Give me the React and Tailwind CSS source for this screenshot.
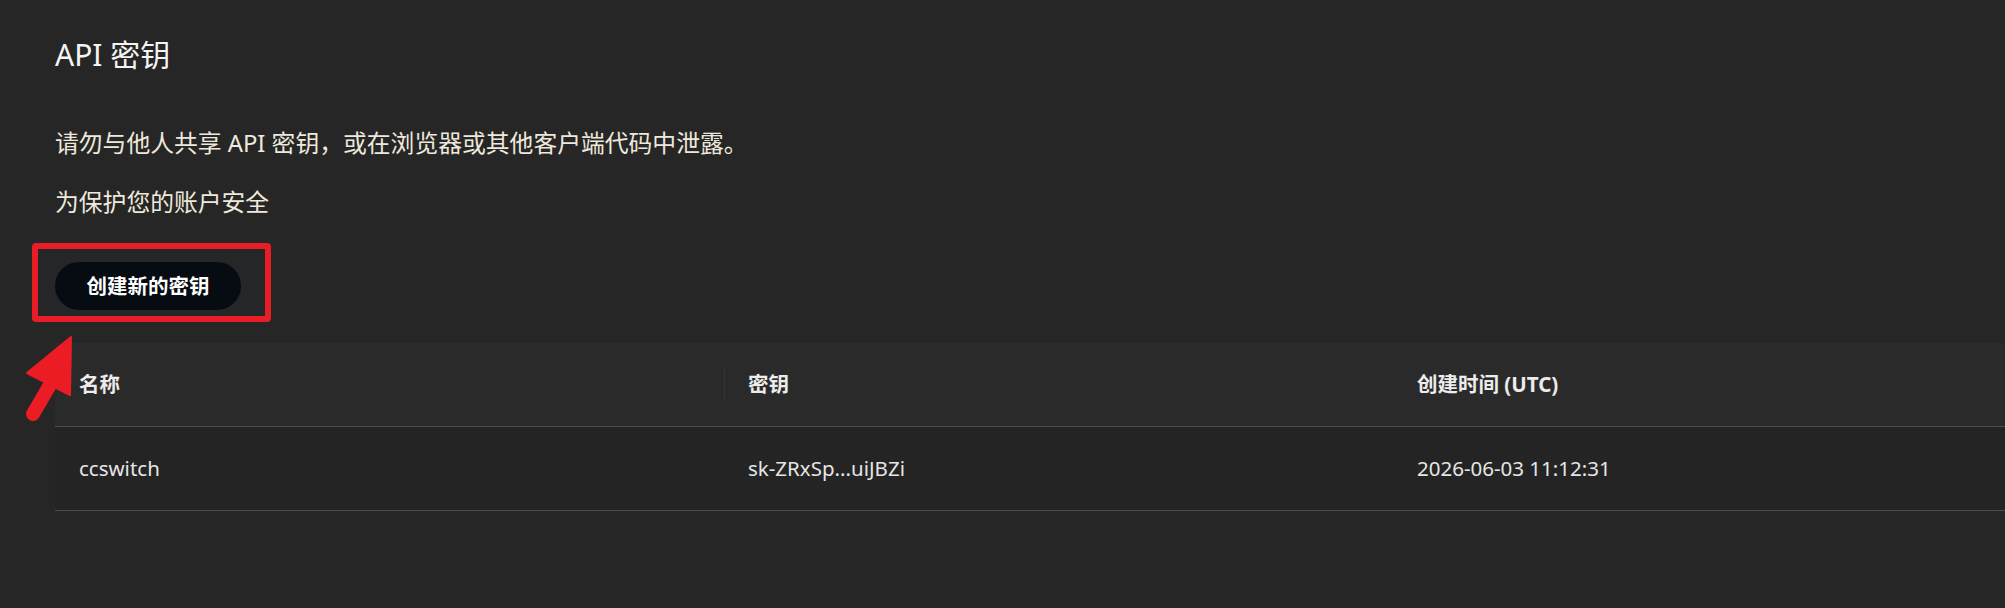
import React from "react";

const rows = [
  { name: "ccswitch", key: "sk-ZRxSp...uiJBZi", created: "2026-06-03 11:12:31" },
];

function PointerArrow() {
  return (
    <svg
      className="absolute left-[20px] top-[330px] pointer-events-none"
      width="64"
      height="100"
      viewBox="0 0 64 100"
    >
      <line x1="34" y1="48" x2="13" y2="84" stroke="#ec1c24" strokeWidth="14" strokeLinecap="round" />
      <polygon points="51,7 7,43 50,65" fill="#ec1c24" stroke="#ec1c24" strokeWidth="2" strokeLinejoin="round" />
    </svg>
  );
}

export default function App() {
  return (
    <div
      className="relative w-full h-[608px] overflow-hidden bg-[#262626] text-[#ececec]"
      style={{ fontFamily: '"Noto Sans", "Noto Sans CJK SC", sans-serif' }}
    >
      <div className="flex flex-col pl-[55px] pt-[33px]">
        <h1 className="text-[30px] leading-[44px] font-normal text-[#f4f4f4]">API 密钥</h1>

        <p className="mt-[48px] text-[23.8px] leading-[36px] text-[#eee9dc]">
          请勿与他人共享 API 密钥，或在浏览器或其他客户端代码中泄露。
        </p>
        <p className="mt-[23px] text-[23.8px] leading-[36px] text-[#eee9dc]">为保护您的账户安全</p>

        <div className="relative mt-[42px] self-start">
          <div className="absolute -left-[23px] -top-[19px] w-[239px] h-[79px] rounded-[4px] border-[6px] border-[#e91d25] bg-[#242628]" />
          <button className="relative h-[48px] w-[186px] rounded-full bg-[#070b12] text-[20.5px] font-bold text-white">
            创建新的密钥
          </button>
        </div>

        <div className="mt-[33px]">
          <div className="grid grid-cols-[669px_669px_1fr] h-[84px] bg-[#2a2a2a] border-b border-[#4d4d4d] text-[20.5px] font-bold text-[#ececec]">
            <div className="relative flex items-center pl-[24px]">名称</div>
            <div className="relative flex items-center pl-[24px]">
              <span className="absolute left-0 top-[25px] h-[32px] w-px bg-[#333333]" />
              密钥
            </div>
            <div className="flex items-center pl-[24px]">创建时间 (UTC)</div>
          </div>
          {rows.map((r) => (
            <div
              key={r.name}
              className="grid grid-cols-[669px_669px_1fr] h-[84px] bg-[#242424] border-b border-[#4d4d4d] text-[20.5px] text-[#e6e6e6]"
            >
              <div className="flex items-center pl-[24px]">{r.name}</div>
              <div className="flex items-center pl-[24px]">{r.key}</div>
              <div className="flex items-center pl-[24px]">{r.created}</div>
            </div>
          ))}
        </div>
      </div>

      <PointerArrow />
    </div>
  );
}
